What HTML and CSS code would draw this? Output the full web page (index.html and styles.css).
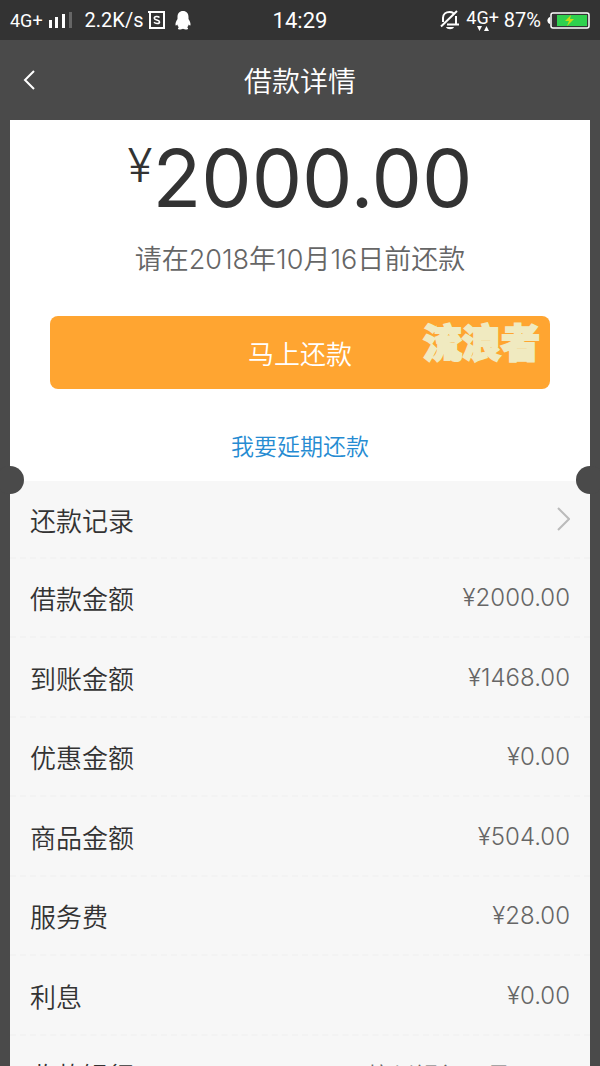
FILE: index.html
```html
<!DOCTYPE html>
<html lang="zh-CN">
<head>
<meta charset="utf-8">
<meta name="viewport" content="width=device-width, initial-scale=1">
<title>借款详情</title>
<link rel="stylesheet" href="styles.css">
</head>
<body>
<div class="screen">
  <div class="status">
    <div class="status-side">
      <span class="net">4G+</span>
      <svg class="signal" width="24" height="17" viewBox="0 0 24 17" aria-hidden="true"><path fill="#fff" d="M0 8h3v8H0zM6 5h3v11H6zM13 2h3v14h-3z"/><path fill="#666" d="M20 0h3v16h-3z"/></svg>
      <span class="speed">2.2K/s</span>
      <svg class="s-icon" width="17" height="18" viewBox="0 0 17 18" fill="none" stroke="#fff" aria-hidden="true"><path stroke-width="2" d="M0 1h16v16H2V1"/><path stroke-width="1.6" d="M11.5 6.5C10 5 6.300 5 6.300 7.200c0 2.300 5.200 1.300 5.200 3.700 0 2-3.800 2.200-5.500.4"/></svg>
      <svg class="penguin" width="16" height="19" viewBox="0 0 16 19" fill="#fff" aria-hidden="true"><path d="M8 0C4.500 0 2.500 2.500 2.500 6v2C1.200 9.800.3 12 .5 14c.2 1 1 .6 1.800-.5.2 1 .7 2 1.500 2.700-1.300.8-1.200 2.300.5 2.300 1.500 0 3-.3 3.700-.8.7.5 2.200.8 3.700.8 1.700 0 1.800-1.500.5-2.300.8-.7 1.300-1.700 1.500-2.700.8 1.100 1.600 1.500 1.800.5.2-2-.7-4.200-2-6V6C13.500 2.500 11.500 0 8 0z"/></svg>
    </div>
    <span class="clock">14:29</span>
    <div class="status-side status-right">
      <svg class="mute" width="19" height="20" viewBox="0 0 19 20" fill="none" stroke="#fff" stroke-width="2" aria-hidden="true"><path d="M3 12V8c0-4 3-6 6.500-6 1.500 0 3 .4 4 1.200M16 6v8.500M7 14.500h12M1 16.500 17 1"/><path fill="#fff" stroke="none" d="M6 17h8c-1 3-7 3-8 0z"/></svg>
      <span class="data">4G+<svg class="arrows" width="12" height="5" viewBox="0 0 12 5" fill="#fff" aria-hidden="true"><path d="M0 0h5L2.500 5zM7 5h5L9.500 0z"/></svg></span>
      <span class="percent">87%</span>
      <svg class="battery" width="43" height="17" viewBox="0 0 43 17" aria-hidden="true"><path fill="#fff" d="M3 5v7C-.5 11-.5 6 3 5z"/><rect x="4" y="1" width="38" height="15" rx="2" fill="#333" stroke="#fff" stroke-width="1.500"/><path fill="#2fd04e" d="M10 3h30v11H10z"/><path fill="#c8d916" d="M24 3l-6 6h4l-2 5 7-7h-4z"/></svg>
    </div>
  </div>
  <header class="nav">
    <button class="back" aria-label="返回"><svg width="12" height="20" viewBox="0 0 12 20" fill="none" stroke="#fff" stroke-width="2" aria-hidden="true"><path d="M11 1 2 10l9 9"/></svg></button>
    <h1 class="title">借款详情</h1>
  </header>
  <main class="card">
    <section class="summary">
      <p class="amount"><span class="yen">¥</span>2000.00</p>
      <p class="due">请在2018年10月16日前还款</p>
      <div class="pay-wrap">
        <button class="pay">马上还款</button>
        <span class="mark">流浪者</span>
      </div>
      <a class="extend" href="#">我要延期还款</a>
    </section>
    <section class="details">
      <a class="row row-link" href="#"><span>还款记录</span><svg width="13" height="24" viewBox="0 0 13 24" fill="none" stroke="#bbb" stroke-width="2" aria-hidden="true"><path d="m1 1 11 11L1 23"/></svg></a>
      <dl class="list">
        <div class="row"><dt>借款金额</dt><dd>¥2000.00</dd></div>
        <div class="row"><dt>到账金额</dt><dd>¥1468.00</dd></div>
        <div class="row"><dt>优惠金额</dt><dd>¥0.00</dd></div>
        <div class="row"><dt>商品金额</dt><dd>¥504.00</dd></div>
        <div class="row"><dt>服务费</dt><dd>¥28.00</dd></div>
        <div class="row"><dt>利息</dt><dd>¥0.00</dd></div>
        <div class="row"><dt>收款银行</dt><dd>杭州银行尾号0000</dd></div>
      </dl>
    </section>
  </main>
</div>
</body>
</html>
```
FILE: styles.css
```css
* { box-sizing: border-box; }
body, h1, p, dl, dd { margin: 0; }
body {
  background: #4a4a4a;
  color: #333;
  font-family: Inter, "Noto Sans CJK SC", sans-serif;
  font-weight: 350;
}
button { border: 0; font: inherit; cursor: pointer; }
a { text-decoration: none; }
.screen { height: 100vh; display: flex; flex-direction: column; overflow: hidden; }
.status {
  flex: none;
  height: 40px;
  padding: 0 10px;
  display: grid;
  grid-template-columns: 1fr auto 1fr;
  align-items: center;
  background: #333;
  color: #fff;
  font-family: Roboto, sans-serif;
  font-weight: 400;
  font-size: 20px;
}
.status-side { display: flex; align-items: center; }
.status-right { justify-content: flex-end; }
.net { font-size: 18px; }
.signal { margin-left: 6px; }
.speed { margin-left: 12px; }
.s-icon { margin-left: 5px; }
.penguin { margin-left: 10px; }
.clock { font-size: 22px; }
.data {
  margin: 0 5px 0 7px;
  display: flex;
  flex-direction: column;
  align-items: center;
  font-size: 18px;
  line-height: 16px;
}
.battery { margin-left: 6px; }
.nav {
  flex: none;
  height: 80px;
  padding: 0 20px;
  display: grid;
  grid-template-columns: 40px 1fr 40px;
  align-items: center;
  color: #fff;
}
.back { height: 40px; padding: 0 3px; display: flex; align-items: center; background: none; }
.title { text-align: center; font-size: 28px; font-weight: 350; }
.card { flex: 1; min-height: 0; margin: 0 10px; background: #f7f7f7; }
.summary {
  height: 361px;
  padding: 18px 40px 0;
  display: flex;
  flex-direction: column;
  align-items: center;
  background: #fff;
}
.amount { display: flex; font-size: 80px; line-height: 80px; font-weight: 400; }
.yen { font-size: 46px; line-height: 54px; font-weight: 350; }
.due { margin-top: 24px; color: #666; font-size: 27px; line-height: 36px; }
.pay-wrap { position: relative; align-self: stretch; margin-top: 38px; }
.pay {
  display: block;
  width: 100%;
  height: 73px;
  border-radius: 8px;
  background: #ffa531;
  color: #fff;
  font-size: 26px;
}
.mark {
  position: absolute;
  top: 0;
  right: 10px;
  color: #f0eac0;
  font-size: 39px;
  line-height: 54px;
  font-weight: 900;
  -webkit-text-stroke: 2px #f0eac0;
  pointer-events: none;
}
.extend { margin-top: 41px; color: #258bd2; font-size: 23px; line-height: 34px; }
.details { position: relative; }
.details::before, .details::after {
  content: "";
  position: absolute;
  top: -15px;
  width: 28px;
  height: 28px;
  border-radius: 50%;
  background: #4a4a4a;
}
.details::before { left: -14px; }
.details::after { right: -14px; }
.row {
  height: 79px;
  padding: 0 20px;
  display: flex;
  align-items: center;
  justify-content: space-between;
  border-bottom: 2px dashed #f3f3f3;
  color: #333;
  font-size: 26px;
}
.row-link { height: 78px; }
.list .row:nth-child(even) { height: 80px; }
dd { color: #666; font-size: 24px; }
```
